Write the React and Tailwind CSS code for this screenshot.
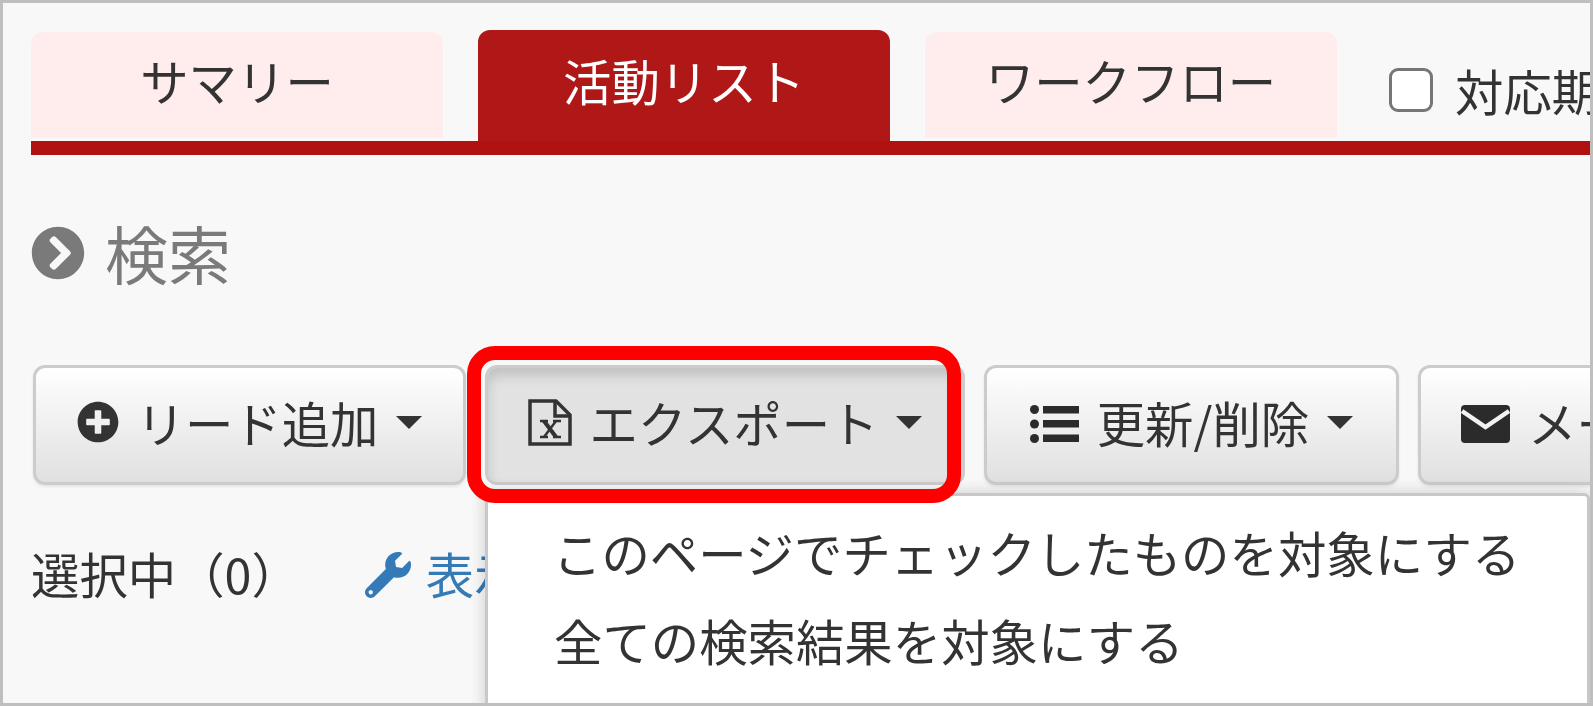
import React from 'react';
import { FaChevronCircleRight, FaPlusCircle, FaWrench } from 'react-icons/fa';

function Caret() {
  return <span className="w-0 h-0 shrink-0 border-x-[13px] border-x-transparent border-t-[13px] border-t-[#333]" />;
}

function ExcelFile() {
  return (
    <svg viewBox="0 0 44 47" className="w-[44px] h-[47px] shrink-0" fill="none" stroke="#333">
      <path d="M2 2h26l14 14v29H2z" strokeWidth="3.5" />
      <path d="M27 2v15h15" strokeWidth="3.5" />
      <path d="M12 22h8M25 22h8M12 38h8M25 38h8" strokeWidth="2.5" />
      <path d="M16 22l12 16" strokeWidth="4" />
      <path d="M28 22L16 38" strokeWidth="2.5" />
    </svg>
  );
}

function ListIcon() {
  return (
    <svg viewBox="0 0 49 38" className="w-[49px] h-[38px] mt-[3px] shrink-0" fill="#2b2b2b">
      <circle cx="4.5" cy="4.5" r="4.5" />
      <circle cx="4.5" cy="19" r="4.5" />
      <circle cx="4.5" cy="33.5" r="4.5" />
      <rect x="13" y="1" width="36" height="7.5" />
      <rect x="13" y="15" width="36" height="7.5" />
      <rect x="13" y="29.5" width="36" height="7.5" />
    </svg>
  );
}

function EnvelopeIcon() {
  return (
    <svg viewBox="0 0 49 38" className="w-[49px] h-[38px] mt-[3px] shrink-0">
      <rect width="49" height="38" rx="4" fill="#2b2b2b" />
      <path d="M1 6l23.5 16L48 6" fill="none" stroke="#f2f2f2" strokeWidth="4.5" />
    </svg>
  );
}

function Tab({ label, active }) {
  return (
    <div
      className={
        active
          ? 'w-[412px] h-[111px] pb-[11px] shrink-0 rounded-t-[12px] bg-[#b01818] text-white flex items-center justify-center'
          : 'w-[412px] h-[106px] mt-[2px] pb-[9px] shrink-0 rounded-t-[12px] bg-[#ffecec] text-[#333] flex items-center justify-center'
      }
    >
      {label}
    </div>
  );
}

function ToolButton({ icon, label, width, pressed, align = 'justify-center' }) {
  return (
    <button
      className={
        'h-[120px] pb-[6px] shrink-0 rounded-[12px] border-[3px] border-[#ccc] flex items-center gap-[18px] text-[#333] ' +
        align + ' ' + width + ' ' +
        (pressed
          ? 'bg-[#e2e2e2] shadow-[inset_0_8px_12px_rgba(0,0,0,0.14)]'
          : 'bg-gradient-to-b from-white to-[#e0e0e0] shadow-[0_2px_3px_rgba(0,0,0,0.08)]')
      }
    >
      {icon}
      <span className="whitespace-nowrap">{label}</span>
      <Caret />
    </button>
  );
}

export default function App() {
  return (
    <div className="relative box-border w-[1593px] h-[706px] overflow-hidden border-[3px] border-[#bfbfbf] bg-[#f8f8f8] text-[48.4px] leading-none font-['Noto_Sans_CJK_JP','Noto_Sans',sans-serif]">
      {/* Tabs */}
      <div className="pl-[28px] pt-[27px]">
        <div className="flex items-start gap-[35px]">
          <Tab label="サマリー" />
          <Tab label="活動リスト" active />
          <Tab label="ワークフロー" />
          <label className="flex items-center gap-[22px] ml-[17px] mt-[36px] text-[#333] whitespace-nowrap">
            <span className="w-[44px] h-[44px] rounded-[9px] border-[3px] border-[#767676] bg-white shrink-0" />
            対応期限
          </label>
        </div>
        <div className="h-[14px] bg-[#b01212]" />

        {/* Heading */}
        <div className="flex items-center gap-[20px] mt-[68px] h-[60px] text-[63px] text-[#7a7a7a]">
          <FaChevronCircleRight className="w-[54px] h-[54px] shrink-0" />
          <span className="-mt-[4px]">検索</span>
        </div>

        {/* Toolbar */}
        <div className="flex gap-[19px] mt-[82px] ml-[2px]">
          <ToolButton width="w-[433px]" icon={<FaPlusCircle className="w-[42px] h-[42px] shrink-0" />} label="リード追加" />
          <ToolButton width="w-[480px]" pressed icon={<ExcelFile />} label="エクスポート" />
          <ToolButton width="w-[415px]" icon={<ListIcon />} label="更新/削除" />
          <ToolButton width="w-[400px]" align="justify-start pl-[40px]" icon={<EnvelopeIcon />} label="メール送信" />
        </div>

        {/* Selection row */}
        <div className="flex items-center mt-[64px] h-[48px] text-[#333] whitespace-nowrap">
          <span>選択中（0）</span>
          <a className="flex items-center gap-[15px] ml-[65px] text-[#337ab7]">
            <FaWrench className="w-[46px] h-[46px] mt-[4px] shrink-0" />
            表示項目
          </a>
        </div>
      </div>

      {/* Open dropdown */}
      <div className="absolute left-[482px] top-[490px] right-0 h-[240px] border-[3px] border-[#c8c8c8] rounded-tr-[6px] bg-white pt-[32px] pl-[65px] text-[#333] shadow-[0_0_16px_rgba(0,0,0,0.18)]">
        <div className="flex flex-col gap-[40px] whitespace-nowrap">
          <div>このページでチェックしたものを対象にする</div>
          <div className="ml-[1px]">全ての検索結果を対象にする</div>
        </div>
      </div>

      {/* Red highlight callout */}
      <div className="absolute left-[464px] top-[343px] w-[494px] h-[157px] rounded-[28px] border-[14px] border-[#ff0000]" />
    </div>
  );
}
